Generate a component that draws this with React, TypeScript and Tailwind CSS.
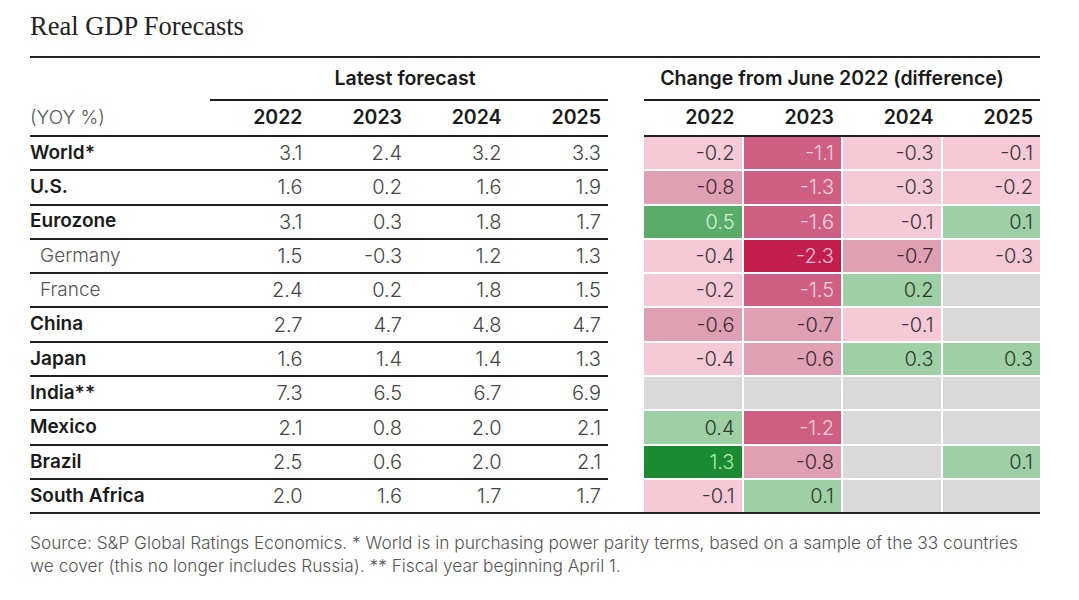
type Tone = "gray" | "pinkLight" | "pinkMid" | "pinkDark" | "pinkDeep" | "greenLight" | "greenMid" | "greenDark";

type Row = {
  name: string;
  sub?: boolean;
  latest: string[];
  change: (string | null)[];
};

const rows: Row[] = [
  { name: "World*", latest: ["3.1", "2.4", "3.2", "3.3"], change: ["-0.2", "-1.1", "-0.3", "-0.1"] },
  { name: "U.S.", latest: ["1.6", "0.2", "1.6", "1.9"], change: ["-0.8", "-1.3", "-0.3", "-0.2"] },
  { name: "Eurozone", latest: ["3.1", "0.3", "1.8", "1.7"], change: ["0.5", "-1.6", "-0.1", "0.1"] },
  { name: "Germany", sub: true, latest: ["1.5", "-0.3", "1.2", "1.3"], change: ["-0.4", "-2.3", "-0.7", "-0.3"] },
  { name: "France", sub: true, latest: ["2.4", "0.2", "1.8", "1.5"], change: ["-0.2", "-1.5", "0.2", null] },
  { name: "China", latest: ["2.7", "4.7", "4.8", "4.7"], change: ["-0.6", "-0.7", "-0.1", null] },
  { name: "Japan", latest: ["1.6", "1.4", "1.4", "1.3"], change: ["-0.4", "-0.6", "0.3", "0.3"] },
  { name: "India**", latest: ["7.3", "6.5", "6.7", "6.9"], change: [null, null, null, null] },
  { name: "Mexico", latest: ["2.1", "0.8", "2.0", "2.1"], change: ["0.4", "-1.2", null, null] },
  { name: "Brazil", latest: ["2.5", "0.6", "2.0", "2.1"], change: ["1.3", "-0.8", null, "0.1"] },
  { name: "South Africa", latest: ["2.0", "1.6", "1.7", "1.7"], change: ["-0.1", "0.1", null, null] },
];

const years = ["2022", "2023", "2024", "2025"];

const toneClass: Record<Tone, string> = {
  gray: "bg-[#d9d9d9] text-[#333]",
  pinkLight: "bg-[#f6c9d7] text-[#3a3336]",
  pinkMid: "bg-[#e0a0b4] text-[#3a2a30]",
  pinkDark: "bg-[#cf5f82] text-[#fcd3df]",
  pinkDeep: "bg-[#c11e4e] text-[#f9bfcf]",
  greenLight: "bg-[#9fcfa5] text-[#2c3a2e]",
  greenMid: "bg-[#5bab6b] text-[#cdf5cf]",
  greenDark: "bg-[#1b8a31] text-[#a9eeae]",
};

function toneFor(v: string | null): Tone {
  if (v === null) return "gray";
  const n = parseFloat(v);
  if (n <= -2) return "pinkDeep";
  if (n <= -1) return "pinkDark";
  if (n <= -0.5) return "pinkMid";
  if (n < 0) return "pinkLight";
  if (n < 0.5) return "greenLight";
  if (n < 1) return "greenMid";
  return "greenDark";
}

export default function App() {
  return (
    <div className="min-h-screen overflow-hidden bg-white px-[30px] font-['Inter',sans-serif] text-[#1a1a1a]">
      {/* Title */}
      <div className="-mt-[12px] h-[14px] text-[14px] leading-[14px] text-[#777]">Table 1</div>
      <h1 className="mt-[9px] font-['Liberation_Serif',serif] text-[26.5px] leading-[30px] text-[#222]">
        Real GDP Forecasts
      </h1>

      <div className="mt-[15px] w-[1010px]">
        <div className="h-[2px] bg-[#1f1f1f]" />

        {/* Group header */}
        <div className="flex h-[43px]">
          <div className="w-[180px]" />
          <div className="flex w-[398px] items-center justify-center border-b-2 border-[#1f1f1f] pr-[8px] text-[19.5px] font-semibold">
            Latest forecast
          </div>
          <div className="w-[36px]" />
          <div className="flex w-[396px] items-center justify-center border-b-2 border-[#1f1f1f] pr-[20px] text-[19.5px] font-semibold">
            Change from June 2022 (difference)
          </div>
        </div>

        {/* Year header */}
        <div className="flex h-[36px]">
          <div className="flex w-[578px] border-b-2 border-[#1f1f1f]">
            <div className="flex w-[180px] items-center text-[19px] font-light text-[#555]">(YOY %)</div>
            <div className="grid w-[398px] grid-cols-4">
              {years.map((y) => (
                <div key={y} className="flex items-center justify-end pr-[7px] text-[19.5px] font-semibold">
                  {y}
                </div>
              ))}
            </div>
          </div>
          <div className="w-[36px]" />
          <div className="grid w-[396px] grid-cols-4 gap-[2px] border-b-2 border-[#1f1f1f]">
            {years.map((y) => (
              <div key={y} className="flex items-center justify-end pr-[7px] text-[19.5px] font-semibold">
                {y}
              </div>
            ))}
          </div>
        </div>

        {/* Body */}
        {rows.map((row, i) => {
          const last = i === rows.length - 1;
          return (
            <div key={row.name} className={last ? "flex h-[32.3px]" : "flex h-[34.3px]"}>
              <div className={last ? "flex w-[578px]" : "flex w-[578px] border-b-2 border-[#1f1f1f]"}>
                <div
                  className={
                    row.sub
                      ? "flex w-[180px] items-center pl-[10px] text-[19px] font-light text-[#555]"
                      : "flex w-[180px] items-center text-[19px] font-semibold"
                  }
                >
                  {row.name}
                </div>
                <div className="grid w-[398px] grid-cols-4">
                  {row.latest.map((v, j) => (
                    <div key={j} className="flex items-center justify-end pr-[7px] text-[20px] font-light text-[#444]">
                      {v}
                    </div>
                  ))}
                </div>
              </div>
              <div className="w-[36px]" />
              <div className={last ? "grid w-[396px] grid-cols-4 gap-[2px]" : "grid w-[396px] grid-cols-4 gap-[2px] pb-[2px]"}>
                {row.change.map((v, j) => (
                  <div
                    key={j}
                    className={`flex items-center justify-end pr-[7px] text-[20px] font-light ${toneClass[toneFor(v)]}`}
                  >
                    {v ?? ""}
                  </div>
                ))}
              </div>
            </div>
          );
        })}

        <div className="h-[2px] bg-[#1f1f1f]" />
      </div>

      {/* Footnote */}
      <p className="mt-[17px] whitespace-nowrap text-[17.3px] font-light leading-[23px] text-[#555]">
        Source: S&amp;P Global Ratings Economics. * World is in purchasing power parity terms, based on a sample of the 33 countries
        <br />
        we cover (this no longer includes Russia). ** Fiscal year beginning April 1.
      </p>
    </div>
  );
}
